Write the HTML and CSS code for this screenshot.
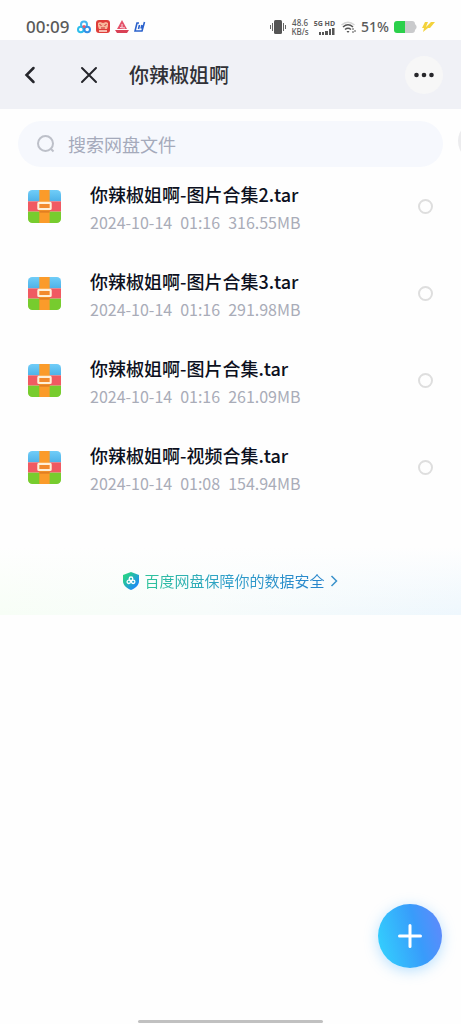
FILE: index.html
```html
<!DOCTYPE html>
<html lang="zh-CN">
<head>
<meta charset="utf-8">
<meta name="viewport" content="width=device-width, initial-scale=1">
<title>你辣椒姐啊</title>
<link rel="stylesheet" href="styles.css">
</head>
<body>
<svg class="defs" width="0" height="0" aria-hidden="true">
  <defs>
    <clipPath id="tile"><rect width="32" height="32" rx="4"/></clipPath>
    <linearGradient id="sky" x2="0" y2="1"><stop stop-color="#70cdf8"/><stop offset="1" stop-color="#4eb2e8"/></linearGradient>
    <linearGradient id="shieldFill" x2="1" y2="1"><stop offset=".2" stop-color="#27cf8c"/><stop offset=".8" stop-color="#1d8df2"/></linearGradient>
    <symbol id="archive" viewBox="0 0 32 32">
      <g clip-path="url(#tile)">
        <rect width="32" height="11" fill="url(#sky)"/>
        <rect y="11" width="32" height="10" fill="#f05a62"/>
        <rect y="21" width="32" height="11" fill="#77cc2e"/>
        <rect x="11" width="10" height="32" fill="#fb9b2a"/>
        <rect x="11" y="20" width="10" height="2" fill="#e27f22"/>
      </g>
      <rect x="10" y="12.500" width="12" height="6" rx=".5" fill="#f28a2d" stroke="#fff0d8" stroke-width="2"/>
    </symbol>
  </defs>
</svg>

<div class="status">
  <span class="clock">00:09</span>
  <div class="apps">
    <svg width="14" height="14" viewBox="0 0 14 14" fill="none" stroke-width="2">
      <circle cx="7" cy="4.500" r="3" stroke="#45b5ef"/>
      <circle cx="3.800" cy="9.500" r="2.800" stroke="#2dbdeb"/>
      <circle cx="10.200" cy="9.500" r="2.800" stroke="#348fe6"/>
      <circle cx="7" cy="6.500" r="1.600" fill="#ef5868"/>
    </svg>
    <svg width="14" height="14" viewBox="0 0 14 14">
      <rect width="14" height="13" rx="3" fill="#df3d39"/>
      <path d="M2 3l2-1 3 1 3-1 2 1v3l-1 3H3L2 6z" fill="#f8b79b"/>
      <path d="M3.500 4.500l2 1M10.500 4.500l-2 1M5 8h4" stroke="#c92f31" stroke-width="1"/>
      <path d="M3 11h8" stroke="#ffe6d8" stroke-width="1.500"/>
    </svg>
    <svg width="14" height="14" viewBox="0 0 14 14">
      <path d="M7 0l5 9H2z" fill="#e4526a"/>
      <path d="M7 4v3M5 7.500l5 .5" stroke="#fff" stroke-width=".8"/>
      <path d="M0 10h14l-2 3H2z" fill="#d94055"/>
    </svg>
    <svg width="12" height="12" viewBox="0 0 12 12" fill="none" stroke="#2b62cc" stroke-width="1.600">
      <path d="M5 2H3L1 10h7l2.500-9M5.500 4L4.500 8M8 4L7 7.500"/>
    </svg>
  </div>
  <div class="signals">
    <svg width="16" height="14" viewBox="0 0 16 14" fill="none" stroke="#666" stroke-width="1">
      <rect x="4" y="0" width="8" height="14" rx="1.500" fill="#555" stroke="none"/>
      <path d="M2.500 3v8M13.500 3v8M.5 5v4M15.500 5v4"/>
    </svg>
    <div class="speed"><span>48.6</span><span>KB/s</span></div>
    <div class="network">
      <span>5G HD</span>
      <svg width="16" height="7" viewBox="0 0 16 7" fill="#555"><path d="M0 4h2v3H0zM3 4h2v3H3zM6 3h3v4H6zM10 1h2v6h-2zM13 0h2.500v7H13z"/></svg>
    </div>
    <svg width="15" height="13" viewBox="0 0 15 13" fill="none" stroke="#555" stroke-width="1.500">
      <path d="M.5 4Q7 -1.500 13.500 4" stroke="#d5d5d5"/>
      <path d="M2 6Q7 1.500 12 6M4 8.500Q7 6 10 8.500"/>
      <path d="M5.500 10h3L7 12z" fill="#555" stroke="none"/>
      <path d="M12 7v2M12 10v2M14 9v2" stroke-width="1"/>
    </svg>
    <span class="percent">51%</span>
    <svg width="23" height="12" viewBox="0 0 23 12">
      <path d="M11 0h7a3 3 0 0 1 3 3l1.500 2v2L21 9a3 3 0 0 1-3 3h-7z" fill="#c9cacc"/>
      <path d="M3 0h8v12H3a3 3 0 0 1-3-3V3a3 3 0 0 1 3-3z" fill="#2bd04b"/>
    </svg>
    <svg width="13" height="12" viewBox="0 0 13 12"><path d="M3 1h3L4 6l5-5h4L8 7H6l-5 4 1-4H0z" fill="#f3d23b"/></svg>
  </div>
</div>

<header class="header">
  <button class="nav" aria-label="返回"><svg width="20" height="20" viewBox="0 0 20 20"><path d="M13.500 3L6.500 10l7 7"/></svg></button>
  <button class="nav nav-close" aria-label="关闭"><svg width="20" height="20" viewBox="0 0 20 20"><path d="M3 3l14 14M17 3L3 17"/></svg></button>
  <h1 class="title">你辣椒姐啊</h1>
  <button class="more" aria-label="更多"><svg width="20" height="6" viewBox="0 0 20 6"><circle cx="2.500" cy="3" r="2.300"/><circle cx="10" cy="3" r="2.300"/><circle cx="17.500" cy="3" r="2.300"/></svg></button>
</header>

<main class="content">
  <div class="search-row">
    <label class="search">
      <svg width="20" height="20" viewBox="0 0 20 20"><circle cx="9.500" cy="9.500" r="7.500"/><path d="M15 15l2.500 2.500"/></svg>
      <input type="search" placeholder="搜索网盘文件" aria-label="搜索网盘文件">
    </label>
    <button class="side" aria-label="筛选"></button>
  </div>

  <ul class="files">
    <li><label class="file">
      <svg class="thumb" aria-hidden="true"><use href="#archive"/></svg>
      <span class="info"><span class="name">你辣椒姐啊-图片合集2.tar</span><span class="meta"><span>2024-10-14</span><span>01:16</span><span>316.55MB</span></span></span>
      <input class="pick" type="checkbox">
    </label></li>
    <li><label class="file">
      <svg class="thumb" aria-hidden="true"><use href="#archive"/></svg>
      <span class="info"><span class="name">你辣椒姐啊-图片合集3.tar</span><span class="meta"><span>2024-10-14</span><span>01:16</span><span>291.98MB</span></span></span>
      <input class="pick" type="checkbox">
    </label></li>
    <li><label class="file">
      <svg class="thumb" aria-hidden="true"><use href="#archive"/></svg>
      <span class="info"><span class="name">你辣椒姐啊-图片合集.tar</span><span class="meta"><span>2024-10-14</span><span>01:16</span><span>261.09MB</span></span></span>
      <input class="pick" type="checkbox">
    </label></li>
    <li><label class="file">
      <svg class="thumb" aria-hidden="true"><use href="#archive"/></svg>
      <span class="info"><span class="name">你辣椒姐啊-视频合集.tar</span><span class="meta"><span>2024-10-14</span><span>01:08</span><span>154.94MB</span></span></span>
      <input class="pick" type="checkbox">
    </label></li>
  </ul>

  <a class="banner" href="#security">
    <svg width="16" height="18" viewBox="0 0 16 18">
      <path d="M8 0l8 3v6c0 4-3 7-8 9-5-2-8-5-8-9V3z" fill="url(#shieldFill)"/>
      <g fill="none" stroke="#fff" stroke-width="1.300"><circle cx="8" cy="6.800" r="1.800"/><circle cx="5.800" cy="9.800" r="1.700"/><circle cx="10.200" cy="9.800" r="1.700"/></g>
    </svg>
    <span class="banner-text">百度网盘保障你的数据安全</span>
    <svg width="8" height="12" viewBox="0 0 8 12"><path d="M1.500 1l5 5-5 5" fill="none" stroke="#3a92cb" stroke-width="1.500"/></svg>
  </a>
</main>

<button class="fab" aria-label="新建"><svg width="24" height="24" viewBox="0 0 24 24"><path d="M12 1.500v21M1.500 12h21"/></svg></button>
<div class="home"></div>
</body>
</html>
```
FILE: styles.css
```css
* { box-sizing: border-box; }

body {
  margin: 0;
  min-height: 100vh;
  display: flex;
  flex-direction: column;
  background: #fefefe;
  color: #0c1020;
  font-family: "Noto Sans CJK SC", "Noto Sans", sans-serif;
  overflow-x: hidden;
}

button {
  border: 0;
  padding: 0;
  background: none;
  font: inherit;
}

svg { display: block; flex: none; }
.defs { position: absolute; }

.status {
  display: flex;
  align-items: center;
  height: 40px;
  padding: 14px 26px 0;
  color: #5a5a5a;
}
.clock {
  font: 500 17px/24px "Noto Sans", sans-serif;
}
.apps {
  display: flex;
  align-items: center;
  gap: 5px;
  margin-left: 7px;
}
.signals {
  display: flex;
  align-items: center;
  gap: 5px;
  margin-left: auto;
}
.speed {
  display: flex;
  flex-direction: column;
  align-items: center;
  font: 500 8px/9px "Noto Sans", sans-serif;
}
.network {
  display: flex;
  flex-direction: column;
  align-items: flex-end;
  gap: 1px;
  margin-right: 1px;
  font: 700 7px/7px "Noto Sans", sans-serif;
}
.percent {
  font: 500 14px/20px "Noto Sans", sans-serif;
}

.header {
  display: flex;
  align-items: center;
  height: 69px;
  padding: 0 18px 0 20px;
  background: #f0f1f6;
}
.nav svg {
  fill: none;
  stroke: #25262b;
  stroke-width: 2.5;
  stroke-linecap: round;
}
.nav-close { margin-left: 39px; }
.nav-close svg { stroke-width: 2; }
.title {
  flex: 1;
  margin: 0 0 0 30px;
  color: #303136;
  font-size: 20px;
  line-height: 28px;
  font-weight: 500;
}
.more {
  display: grid;
  place-items: center;
  width: 38px;
  height: 38px;
  border-radius: 50%;
  background: #f7f7f7;
}
.more svg { fill: #26262a; }

.content { flex: 1; }
.search-row {
  display: flex;
  align-items: center;
  gap: 15px;
  padding: 12px 0 0 18px;
  overflow: hidden;
}
.search {
  flex: 1;
  min-width: 0;
  display: flex;
  align-items: center;
  gap: 12px;
  height: 46px;
  padding: 0 18px;
  border-radius: 23px;
  background: #f6f8fd;
}
.search svg {
  fill: none;
  stroke: #bdc0c9;
  stroke-width: 2;
}
.search input {
  flex: 1;
  min-width: 0;
  border: 0;
  padding: 0;
  outline: 0;
  background: none;
  font: inherit;
  font-size: 18px;
  line-height: 26px;
}
.search input::placeholder { color: #a5aabb; opacity: 1; }
.side {
  flex: none;
  align-self: flex-start;
  width: 40px;
  height: 40px;
  margin-right: -37px;
  border-radius: 50%;
  background: #ececee;
}

.files {
  display: flex;
  flex-direction: column;
  gap: 30px;
  margin: 0;
  padding: 11px 0 0;
  list-style: none;
}
.file {
  display: flex;
  align-items: center;
  height: 57px;
  padding: 0 28px;
}
.thumb { width: 33px; height: 33px; }
.info {
  flex: 1;
  display: flex;
  flex-direction: column;
  gap: 2px;
  margin-left: 29px;
}
.name {
  font-size: 18px;
  line-height: 28px;
  font-weight: 500;
}
.meta {
  display: flex;
  gap: 8px;
  color: #a9acb8;
  font-size: 16px;
  line-height: 24px;
}
.pick {
  appearance: none;
  flex: none;
  width: 15px;
  height: 15px;
  margin: 0;
  border: 2px solid #dedede;
  border-radius: 50%;
}
.pick:checked { background: #1d8df2; }

.banner {
  display: flex;
  align-items: center;
  justify-content: center;
  gap: 5px;
  height: 68px;
  margin-top: 51px;
  background:
    linear-gradient(#fefefe, #fefefe00),
    linear-gradient(90deg, #f7fef6, #f7fcfb 45%, #eef7fd);
  text-decoration: none;
}
.banner-text {
  background: linear-gradient(90deg, #2fc49a, #2f9fc9 45%, #2784cc);
  background-clip: text;
  color: transparent;
  font-size: 15px;
  line-height: 22px;
}

.fab {
  position: fixed;
  right: 19px;
  bottom: 56px;
  display: grid;
  place-items: center;
  width: 64px;
  height: 64px;
  border-radius: 50%;
  background: linear-gradient(75deg, #33d0fd 5%, #389cfb 60%, #6089fb 95%);
  box-shadow: 0 3px 14px #50b4ff66;
}
.fab svg {
  fill: none;
  stroke: #fff;
  stroke-width: 3;
  stroke-linecap: round;
}
.home {
  align-self: center;
  width: 40%;
  height: 3px;
  margin-bottom: 1px;
  border-radius: 2px;
  background: #c1c1c1;
}
```
